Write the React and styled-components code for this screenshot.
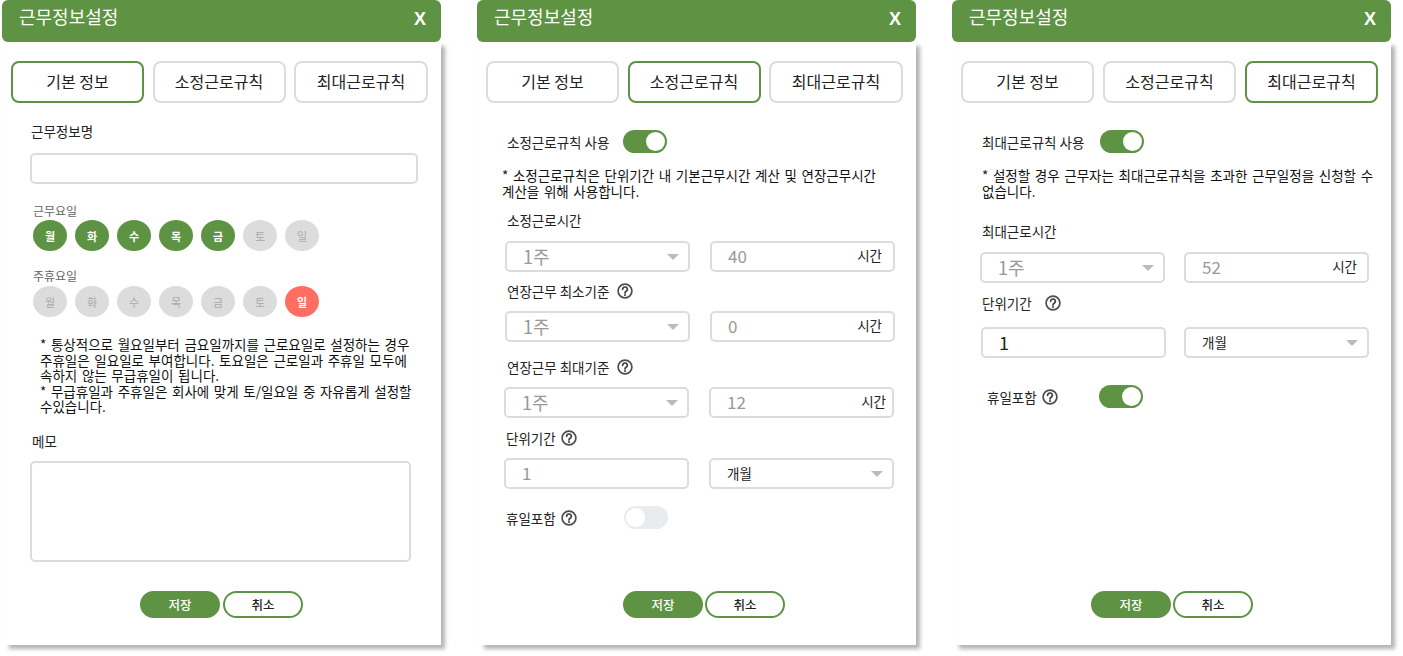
import React from 'react'
import styled, { createGlobalStyle } from 'styled-components'

const green = '#5e9344'
const line = '#dcdcdc'

const GlobalStyle = createGlobalStyle`
  html, body {
    margin: 0;
    background: #fff;
  }
  body {
    font-family: "Noto Sans CJK KR", "Noto Sans", sans-serif;
    color: #222;
  }
`

const Page = styled.div`
  display: flex;
  gap: 36px;
  width: 1403px;
  height: 656px;
  padding-left: 2px;
  box-sizing: border-box;
  overflow: hidden;
`

const Panel = styled.section`
  width: 439px;
  height: 645px;
  display: flex;
  flex-direction: column;
`

const Header = styled.header`
  height: 42px;
  flex: none;
  box-sizing: border-box;
  padding: 3px 15px 0 17px;
  display: flex;
  justify-content: space-between;
  background: ${green};
  border-radius: 6px;
  color: #fff;
  position: relative;
  z-index: 1;
`

const Title = styled.h2`
  margin: 0;
  font-size: 18px;
  font-weight: 400;
  line-height: 26px;
`

const Close = styled.span`
  font-family: "Liberation Sans", sans-serif;
  font-size: 18px;
  font-weight: 700;
  line-height: 32px;
`

const Body = styled.div`
  flex: 1;
  margin-left: 3px;
  display: flex;
  flex-direction: column;
  background: #fff;
  box-shadow: 4px 4px 4px #b4b4b4;
`

const Tabs = styled.nav`
  display: grid;
  grid-template-columns: 133px 133px ${(p) => p.$last}px;
  gap: ${(p) => p.$gap}px;
  margin: 19px 0 0 6px;
`

const Tab = styled.button`
  height: 42px;
  padding: 0 0 2px;
  box-sizing: border-box;
  background: #fff;
  border: 2px solid ${(p) => (p.$active ? green : line)};
  border-radius: 8px;
  font-family: inherit;
  font-size: 16px;
  color: #222;
`

const Label = styled.div`
  display: flex;
  align-items: center;
  gap: ${(p) => p.$gap || 7}px;
  height: 18px;
  margin: ${(p) => p.$top}px 0 0 ${(p) => p.$left}px;
  font-size: 13.5px;
  white-space: nowrap;
`

const DayLabel = styled.div`
  height: 16px;
  line-height: 17px;
  margin: ${(p) => p.$top}px 0 0 28px;
  font-size: 12px;
  color: #666;
`

const Days = styled.div`
  display: flex;
  gap: 8px;
  margin: ${(p) => p.$top}px 0 0 28px;
`

const Day = styled.span`
  width: 34px;
  height: 31px;
  border-radius: 50%;
  display: flex;
  align-items: center;
  justify-content: center;
  font-size: 11px;
  font-weight: ${(p) => (p.$on || p.$rest ? 700 : 400)};
  color: ${(p) => (p.$on || p.$rest ? '#fff' : '#aaa')};
  background: ${(p) => (p.$rest ? '#ff6e61' : p.$on ? green : '#dcdcdc')};
`

const Note = styled.p`
  margin: ${(p) => p.$top}px 0 0 ${(p) => p.$left}px;
  width: ${(p) => p.$width}px;
  font-size: 13.5px;
  word-spacing: 1.6px;
  line-height: 15.5px;
  color: #111;
`

const Box = styled.div`
  height: 31px;
  box-sizing: border-box;
  display: flex;
  align-items: center;
  justify-content: space-between;
  padding: 0 ${(p) => p.$right || 11}px 0 16px;
  background: #fff;
  border: 2px solid ${line};
  border-radius: 5px;
`

const WideBox = styled(Box)`
  width: ${(p) => p.$width}px;
  height: ${(p) => p.$height}px;
  margin: ${(p) => p.$top}px 0 0 25px;
`

const Pair = styled.div`
  display: grid;
  grid-template-columns: 185px 185px;
  gap: ${(p) => p.$gap || 20}px;
  margin: ${(p) => p.$top}px 0 0 ${(p) => p.$left}px;
`

const Value = styled.span`
  padding-bottom: 2px;
  font-size: ${(p) => p.$size || 17}px;
  color: ${(p) => (p.$dark ? '#222' : '#999')};
`

const Unit = styled.span`
  padding-bottom: 3px;
  font-size: 13.5px;
  color: #222;
`

const Option = styled.span`
  padding-bottom: 2px;
  font-size: 13.5px;
  color: #222;
`

const Arrow = styled.i`
  width: 0;
  height: 0;
  margin-right: -2px;
  border-left: 6px solid transparent;
  border-right: 6px solid transparent;
  border-top: 6px solid #bbb;
`

const SwitchRow = styled.div`
  display: flex;
  align-items: center;
  height: 23px;
  margin: ${(p) => p.$top}px 0 0 ${(p) => p.$left}px;
  font-size: 13.5px;
  gap: 5px;
`

const Track = styled.span`
  width: 44px;
  height: 23px;
  box-sizing: border-box;
  padding: 2px;
  margin-left: ${(p) => p.$left}px;
  display: flex;
  justify-content: ${(p) => (p.$on ? 'flex-end' : 'flex-start')};
  border-radius: 12px;
  background: ${(p) => (p.$on ? green : '#e9ecef')};
`

const Knob = styled.span`
  width: 19px;
  height: 19px;
  border-radius: 50%;
  background: #fff;
`

const Actions = styled.div`
  display: flex;
  gap: ${(p) => p.$gap}px;
  margin: auto 0 27px ${(p) => p.$left}px;
`

const Action = styled.button`
  width: 80px;
  height: 27px;
  padding: 0;
  box-sizing: border-box;
  border: 2px solid ${green};
  border-radius: 14px;
  background: ${(p) => (p.$primary ? green : '#fff')};
  color: ${(p) => (p.$primary ? '#fff' : '#222')};
  font-family: inherit;
  font-size: 12.5px;
  font-weight: 500;
`

const Help = () => (
  <svg width="16" height="16" viewBox="0 0 16 16" fill="none">
    <circle cx="8" cy="8" r="6.9" stroke="#4d4d4d" strokeWidth="1.7" />
    <path
      d="M5.6 6.3a2.4 2.3 0 1 1 3.6 2c-.8.5-1.2.9-1.2 1.6"
      stroke="#3d3d3d"
      strokeWidth="1.7"
      strokeLinecap="round"
    />
    <circle cx="8" cy="12" r="1" fill="#3d3d3d" />
  </svg>
)

const Switch = ({ on, left }) => (
  <Track $on={on} $left={left}>
    <Knob />
  </Track>
)

const TabBar = ({ active, gap = 8.5, last = 134 }) => (
  <Tabs $gap={gap} $last={last}>
    {['기본 정보', '소정근로규칙', '최대근로규칙'].map((name, i) => (
      <Tab key={name} $active={i === active}>
        {name}
      </Tab>
    ))}
  </Tabs>
)

const WeekSelect = () => (
  <Box>
    <Value $size={18}>1주</Value>
    <Arrow />
  </Box>
)

const HourInput = ({ value, right }) => (
  <Box $right={right}>
    <Value>{value}</Value>
    <Unit>시간</Unit>
  </Box>
)

const MonthSelect = () => (
  <Box>
    <Option>개월</Option>
    <Arrow />
  </Box>
)

const Buttons = ({ left, gap }) => (
  <Actions $left={left} $gap={gap}>
    <Action $primary>저장</Action>
    <Action>취소</Action>
  </Actions>
)

const Shell = ({ children }) => (
  <Panel>
    <Header>
      <Title>근무정보설정</Title>
      <Close>X</Close>
    </Header>
    <Body>{children}</Body>
  </Panel>
)

const days = ['월', '화', '수', '목', '금', '토', '일']

const BasicInfo = () => (
  <Shell>
    <TabBar active={0} />
    <Label $top={19} $left={26}>근무정보명</Label>
    <WideBox $width={388} $height={31} $top={13} />
    <DayLabel $top={18}>근무요일</DayLabel>
    <Days $top={2}>
      {days.map((d, i) => (
        <Day key={d} $on={i < 5}>{d}</Day>
      ))}
    </Days>
    <DayLabel $top={16}>주휴요일</DayLabel>
    <Days $top={3}>
      {days.map((d, i) => (
        <Day key={d} $rest={i === 6}>{d}</Day>
      ))}
    </Days>
    <Note $top={20} $left={35} $width={378}>
      * 통상적으로 월요일부터 금요일까지를 근로요일로 설정하는 경우 주휴일은 일요일로 부여합니다. 토요일은 근로일과 주휴일 모두에 속하지 않는 무급휴일이 됩니다.
      <br />
      * 무급휴일과 주휴일은 회사에 맞게 토/일요일 중 자유롭게 설정할 수있습니다.
    </Note>
    <Label $top={17} $left={27}>메모</Label>
    <WideBox $width={381} $height={101} $top={11} />
    <Buttons left={135} gap={3} />
  </Shell>
)

const RegularRule = () => (
  <Shell>
    <TabBar active={1} />
    <SwitchRow $top={27} $left={27}>
      소정근로규칙 사용
      <Switch on left={9} />
    </SwitchRow>
    <Note $top={15} $left={22} $width={385}>
      * 소정근로규칙은 단위기간 내 기본근무시간 계산 및 연장근무시간 계산을 위해 사용합니다.
    </Note>
    <Label $top={12} $left={27}>소정근로시간</Label>
    <Pair $top={12} $left={25}>
      <WeekSelect />
      <HourInput value="40" />
    </Pair>
    <Label $top={10} $left={27} $gap={8}>연장근무 최소기준 <Help /></Label>
    <Pair $top={11} $left={25}>
      <WeekSelect />
      <HourInput value="0" />
    </Pair>
    <Label $top={16} $left={27} $gap={8}>연장근무 최대기준 <Help /></Label>
    <Pair $top={11} $left={24}>
      <WeekSelect />
      <HourInput value="12" right={6} />
    </Pair>
    <Label $top={11} $left={26} $gap={5}>단위기간 <Help /></Label>
    <Pair $top={11} $left={24}>
      <Box>
        <Value>1</Value>
      </Box>
      <MonthSelect />
    </Pair>
    <SwitchRow $top={17} $left={26}>
      휴일포함 <Help />
      <Switch left={42} />
    </SwitchRow>
    <Buttons left={143} gap={2} />
  </Shell>
)

const MaxRule = () => (
  <Shell>
    <TabBar active={2} gap={9} last={133} />
    <SwitchRow $top={27} $left={27}>
      최대근로규칙 사용
      <Switch on left={11} />
    </SwitchRow>
    <Note $top={15} $left={27} $width={395}>
      * 설정할 경우 근무자는 최대근로규칙을 초과한 근무일정을 신청할 수 없습니다.
    </Note>
    <Label $top={23} $left={27}>최대근로시간</Label>
    <Pair $top={12} $left={25} $gap={19}>
      <WeekSelect />
      <HourInput value="52" right={10} />
    </Pair>
    <Label $top={11} $left={27} $gap={13}>단위기간 <Help /></Label>
    <Pair $top={15} $left={26} $gap={18}>
      <Box>
        <Value $dark $size={18}>1</Value>
      </Box>
      <MonthSelect />
    </Pair>
    <SwitchRow $top={27} $left={32}>
      휴일포함 <Help />
      <Switch on left={36} />
    </SwitchRow>
    <Buttons left={136} gap={2} />
  </Shell>
)

export default function App() {
  return (
    <>
      <GlobalStyle />
      <Page>
        <BasicInfo />
        <RegularRule />
        <MaxRule />
      </Page>
    </>
  )
}
